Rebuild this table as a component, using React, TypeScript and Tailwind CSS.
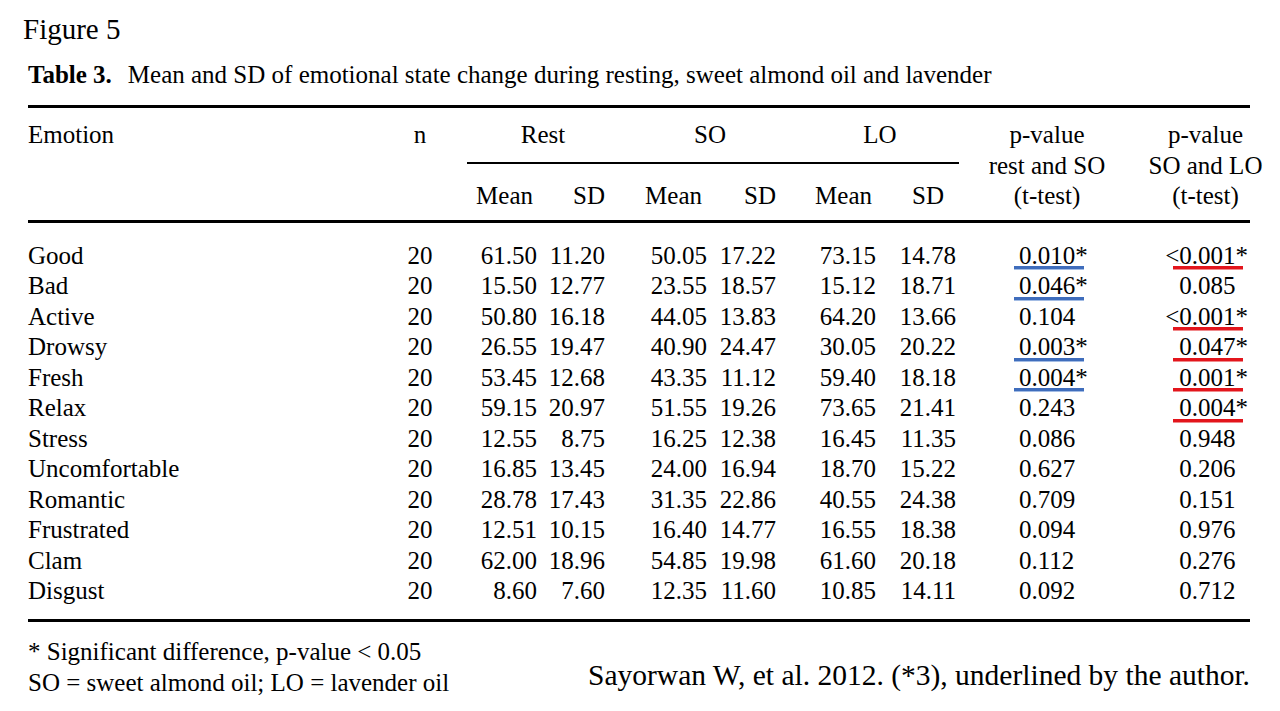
import React from 'react';

type Row = {
  emotion: string;
  n: number;
  vals: string[];
  p1: string;
  p1Mark?: boolean;
  p2: string;
  p2Mark?: boolean;
};

const rows: Row[] = [
  { emotion: 'Good', n: 20, vals: ['61.50', '11.20', '50.05', '17.22', '73.15', '14.78'], p1: '0.010*', p1Mark: true, p2: '<0.001*', p2Mark: true },
  { emotion: 'Bad', n: 20, vals: ['15.50', '12.77', '23.55', '18.57', '15.12', '18.71'], p1: '0.046*', p1Mark: true, p2: '0.085' },
  { emotion: 'Active', n: 20, vals: ['50.80', '16.18', '44.05', '13.83', '64.20', '13.66'], p1: '0.104', p2: '<0.001*', p2Mark: true },
  { emotion: 'Drowsy', n: 20, vals: ['26.55', '19.47', '40.90', '24.47', '30.05', '20.22'], p1: '0.003*', p1Mark: true, p2: '0.047*', p2Mark: true },
  { emotion: 'Fresh', n: 20, vals: ['53.45', '12.68', '43.35', '11.12', '59.40', '18.18'], p1: '0.004*', p1Mark: true, p2: '0.001*', p2Mark: true },
  { emotion: 'Relax', n: 20, vals: ['59.15', '20.97', '51.55', '19.26', '73.65', '21.41'], p1: '0.243', p2: '0.004*', p2Mark: true },
  { emotion: 'Stress', n: 20, vals: ['12.55', '8.75', '16.25', '12.38', '16.45', '11.35'], p1: '0.086', p2: '0.948' },
  { emotion: 'Uncomfortable', n: 20, vals: ['16.85', '13.45', '24.00', '16.94', '18.70', '15.22'], p1: '0.627', p2: '0.206' },
  { emotion: 'Romantic', n: 20, vals: ['28.78', '17.43', '31.35', '22.86', '40.55', '24.38'], p1: '0.709', p2: '0.151' },
  { emotion: 'Frustrated', n: 20, vals: ['12.51', '10.15', '16.40', '14.77', '16.55', '18.38'], p1: '0.094', p2: '0.976' },
  { emotion: 'Clam', n: 20, vals: ['62.00', '18.96', '54.85', '19.98', '61.60', '20.18'], p1: '0.112', p2: '0.276' },
  { emotion: 'Disgust', n: 20, vals: ['8.60', '7.60', '12.35', '11.60', '10.85', '14.11'], p1: '0.092', p2: '0.712' },
];

// column grid shared by header and body
const cols = 'grid grid-cols-[352px_80px_80px_68px_102px_69px_100px_80px_201px_97px]';

const P2 = ({ text, mark }: { text: string; mark?: boolean }) => {
  const starred = text.endsWith('*');
  return (
    <span className="relative inline-block">
      {text}
      {!starred && <span className="invisible">*</span>}
      {mark && <span className="absolute right-[5px] bottom-[1px] w-[70px] h-[4px] bg-[#e3151c] border-b border-[#f08a8c]"></span>}
    </span>
  );
};

const P1 = ({ text, mark }: { text: string; mark?: boolean }) => (
  <span className="relative inline-block">
    {text}
    {mark && <span className="absolute left-[-5px] bottom-[1px] w-[70px] h-[4px] bg-[#3f6dbc] border-b border-[#a3bce4]"></span>}
  </span>
);

export default function App() {
  return (
    <div className="w-[1280px] h-[711px] bg-white text-black font-['Liberation_Serif','Times_New_Roman',serif] overflow-hidden">
      <div className="pl-[23px] pt-[12px] text-[29px] leading-[34px]">Figure 5</div>

      <div className="pl-[28px] pt-[14px] text-[25px] leading-[30px]">
        <span className="font-bold">Table 3.</span>
        <span className="ml-[16px]">Mean and SD of emotional state change during resting, sweet almond oil and lavender</span>
      </div>

      <div className="ml-[28px] w-[1222px] mt-[15px] text-[25px] leading-[30.5px]">
        <div className="h-[3px] bg-black"></div>

        {/* header */}
        <div className={`${cols} mt-[12px] grid-rows-[30.5px_30.5px_30.5px]`}>
          <div className="row-start-1 col-start-1">Emotion</div>
          <div className="row-start-1 col-start-2 text-center">n</div>
          <div className="row-start-1 col-start-3 col-span-2 text-center pl-[18px]">Rest</div>
          <div className="row-start-1 col-start-5 col-span-2 text-center pl-[33px]">SO</div>
          <div className="row-start-1 col-start-7 col-span-2 text-center pl-[22px]">LO</div>
          <div className="row-start-2 col-start-3 col-span-6 pt-[11px] pl-[7px]">
            <div className="h-[2px] bg-black"></div>
          </div>
          <div className="row-start-3 col-start-3 text-right pr-[7px]">Mean</div>
          <div className="row-start-3 col-start-4 text-right pr-[3px]">SD</div>
          <div className="row-start-3 col-start-5 text-right pr-[8px]">Mean</div>
          <div className="row-start-3 col-start-6 text-right pr-[3px]">SD</div>
          <div className="row-start-3 col-start-7 text-right pr-[7px]">Mean</div>
          <div className="row-start-3 col-start-8 text-right pr-[15px]">SD</div>
          <div className="row-start-1 row-span-3 col-start-9 flex flex-col items-center pr-[25px]">
            <span>p-value</span>
            <span>rest and SO</span>
            <span>(t-test)</span>
          </div>
          <div className="row-start-1 row-span-3 col-start-10 flex flex-col items-center whitespace-nowrap pr-[6px]">
            <span>p-value</span>
            <span>SO and LO</span>
            <span>(t-test)</span>
          </div>
        </div>

        <div className="mt-[8.5px] h-[3px] bg-black"></div>

        {/* body */}
        <div className="mt-[17.75px]">
          {rows.map(r => (
            <div key={r.emotion} className={cols}>
              <div>{r.emotion}</div>
              <div className="text-center">{r.n}</div>
              {r.vals.map((v, i) => (
                <div key={i} className="text-right pr-[3px]">{v}</div>
              ))}
              <div className="pl-[60px]">
                <P1 text={r.p1} mark={r.p1Mark} />
              </div>
              <div className="text-right pr-[9px]">
                <P2 text={r.p2} mark={r.p2Mark} />
              </div>
            </div>
          ))}
        </div>

        <div className="mt-[12.25px] h-[3px] bg-black"></div>

        {/* footnotes */}
        <div className="flex justify-between mt-[14px]">
          <div className="text-[25px] leading-[31px]">
            <div>* Significant difference, p-value &lt; 0.05</div>
            <div>SO = sweet almond oil; LO = lavender oil</div>
          </div>
          <div className="pt-[22px] text-[29.5px] leading-[34px]">
            Sayorwan W, et al. 2012. (*3), underlined by the author.
          </div>
        </div>
      </div>
    </div>
  );
}
